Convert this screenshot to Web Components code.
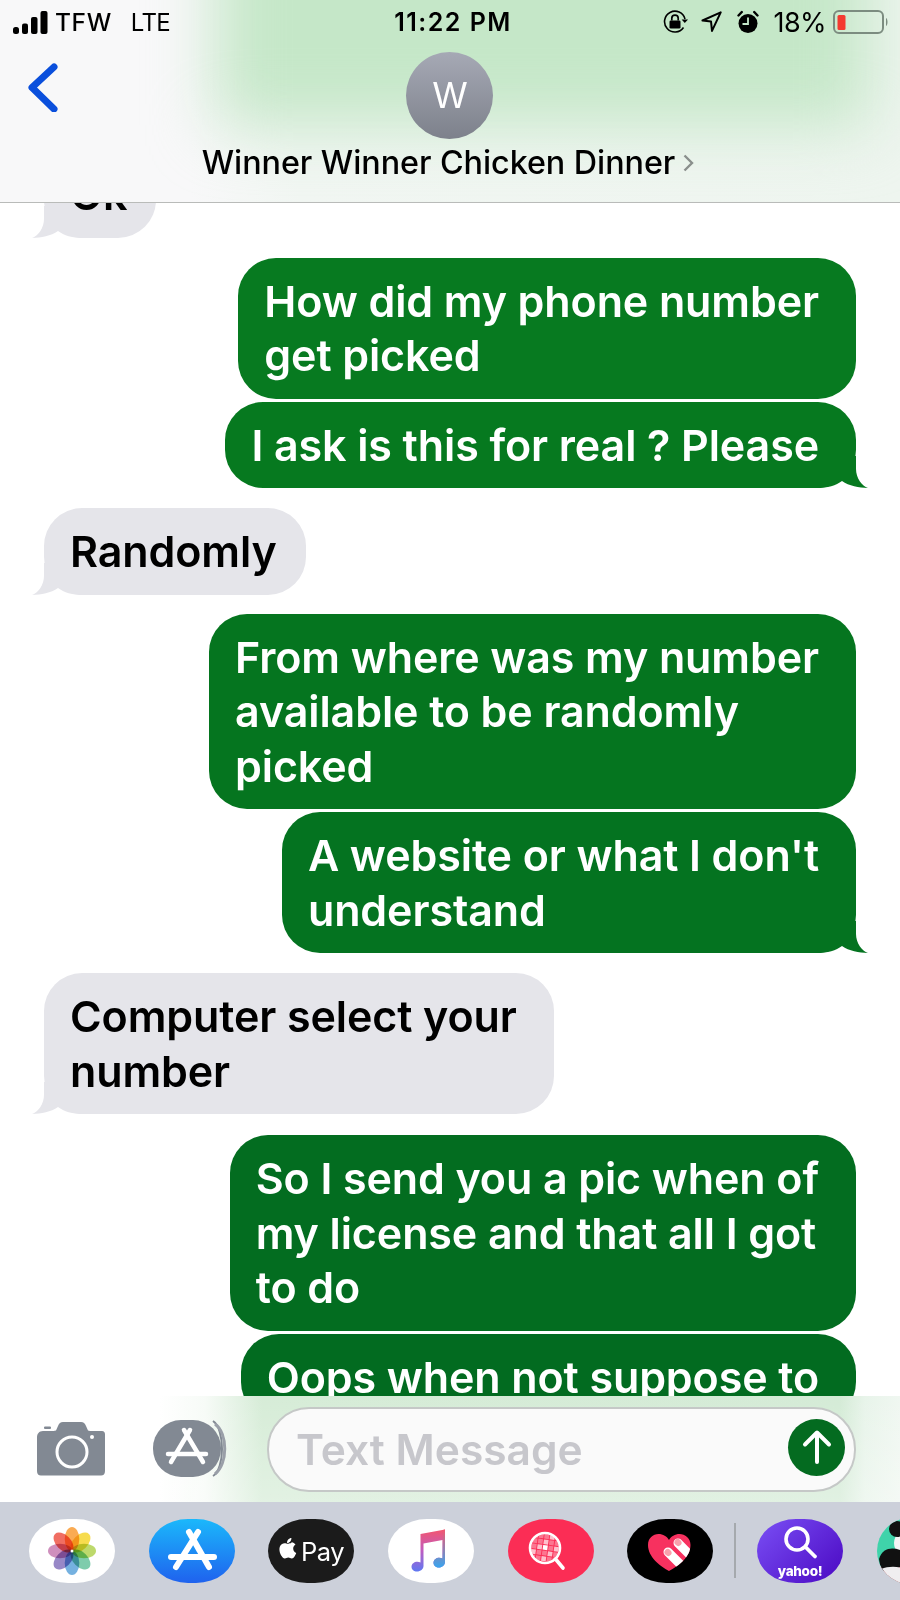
<!DOCTYPE html>
<html lang="en"><head><meta charset="utf-8"><title>Messages</title>
<style>
html,body{margin:0;padding:0;background:#fff}
body{width:900px;height:1600px;overflow:hidden;font-family:Inter,"Liberation Sans",sans-serif}
imessage-screen{width:900px;height:1600px}
</style></head>
<body>
<imessage-screen>
  <chat-header slot="header" name="Winner Winner Chicken Dinner" initial="W"></chat-header>
  <msg-bubble from="them" tail style="margin-top:-52px;--pr:29px">Ok</msg-bubble>
  <msg-bubble from="me" style="--c:#077a20;margin-top:20px">How did my phone number<br>get picked</msg-bubble>
  <msg-bubble from="me" tail style="--c:#06791f;margin-top:3px">I ask is this for real ? Please</msg-bubble>
  <msg-bubble from="them" tail style="margin-top:20px;--pr:29px">Randomly</msg-bubble>
  <msg-bubble from="me" style="--c:#05751f;margin-top:19px">From where was my number<br>available to be randomly<br>picked</msg-bubble>
  <msg-bubble from="me" tail style="--c:#047320;margin-top:3px">A website or what I don't<br>understand</msg-bubble>
  <msg-bubble from="them" tail style="margin-top:20px">Computer select your<br>number</msg-bubble>
  <msg-bubble from="me" style="--c:#036d20;margin-top:21px">So I send you a pic when of<br>my license and that all I got<br>to do</msg-bubble>
  <msg-bubble from="me" style="--c:#026b20;margin-top:3px">Oops when not suppose to</msg-bubble>
  <chat-composer slot="composer" placeholder="Text Message"></chat-composer>
  <app-dock slot="dock"></app-dock>
</imessage-screen>
<script>
const FONT='Inter,"Liberation Sans",sans-serif';
function make(name,html,setup){
  customElements.define(name,class extends HTMLElement{
    connectedCallback(){
      if(this.shadowRoot)return;
      const r=this.attachShadow({mode:'open'});
      r.innerHTML=typeof html==='function'?html(this):html;
      if(setup)setup(this,r);
    }
  });
}
make('imessage-screen',`<style>
:host{display:flex;flex-direction:column;overflow:hidden}
.msgs{flex:1 1 0;min-height:0;overflow:hidden;display:flex;flex-direction:column;padding:0 44px;background:#fff}
</style>
<slot name="header"></slot>
<div class="msgs"><slot></slot></div>
<slot name="composer"></slot>
<slot name="dock"></slot>`);

const TAIL=`<svg class="tail" width="52" height="32" viewBox="0 0 52 32"><path d="M12 0 L12 13 C12 22 6 30 0 32 C9 31.500 19 30 26 25 C32 29.500 40 32 52 32 L52 0 Z"/></svg>`;
make('msg-bubble',el=>`<style>
:host{display:block;flex:none;position:relative;font:600 43px/54.500px ${FONT};
 box-sizing:border-box;border-radius:38px;padding:16px var(--pr,37px) 16px 26px;width:max-content;
 letter-spacing:-.1px}
:host([from=them]){--c:#e5e5ea;background:var(--c);color:#000;align-self:flex-start}
:host([from=me]){background:var(--c);color:#fff;align-self:flex-end}
.tail{position:absolute;bottom:0;fill:var(--c);display:block}
:host([from=them]) .tail{left:-12px}
:host([from=me]) .tail{right:-12px;transform:scaleX(-1)}
.t{position:relative}
</style>${el.hasAttribute('tail')?TAIL:''}<span class="t"><slot></slot></span>`);

make('status-bar',`<style>
:host{display:grid;grid-template-columns:1fr auto 1fr;align-items:center;height:44px;color:#000;font-family:${FONT};position:relative}
.l,.r{display:flex;align-items:center}
.l{padding-left:13px}
.r{justify-content:flex-end;padding-right:12px}
.car{font-size:24.500px;font-weight:500;margin-left:7px;letter-spacing:.6px}
.net{font-size:24px;font-weight:400;margin-left:19px;letter-spacing:-.6px}
.time{font-size:25px;font-weight:600;margin-left:6px;letter-spacing:1.500px}
.pct{font-size:27px;font-weight:400;letter-spacing:-.6px;margin:0 7px 0 15px}
svg{display:block}
.ic{margin-left:15px}
.ic.loc{margin-left:12px}
</style>
<div class="l">
<svg width="35" height="23" viewBox="0 0 35 23"><g fill="#000"><rect x="0" y="16" width="6" height="7" rx="2.500"/><rect x="9" y="12.500" width="6" height="10.500" rx="2"/><rect x="18" y="6" width="6.500" height="17" rx="2"/><rect x="27.500" y="0" width="7" height="23" rx="2"/></g></svg>
<span class="car">TFW</span><span class="net">LTE</span></div>
<div class="time">11:22 PM</div>
<div class="r">
<svg width="26" height="24" viewBox="0 0 26 24"><path d="M20.500 17.500A10.400 10.400 0 1 1 22 9" fill="none" stroke="#000" stroke-width="1.600"/><path d="M18.600 9.500h6.400l-3.200 3.600z" fill="#000"/><rect x="6.500" y="10.500" width="11" height="8" rx="1.300" fill="#000"/><path d="M8.800 10.500V8.300a3.200 3.200 0 0 1 6.400 0v2.200" fill="none" stroke="#000" stroke-width="1.700"/></svg>
<svg class="ic loc" width="21" height="22" viewBox="0 0 21 22"><path d="M19.700 1.300 1.500 9.500l8.500.9 1 9.500z" fill="none" stroke="#000" stroke-width="2" stroke-linejoin="round"/></svg>
<svg class="ic" width="22" height="24" viewBox="0 0 22 24"><circle cx="11" cy="13.500" r="9.500" fill="#000"/><path d="M11 7.500v6.500H5.500" fill="none" stroke="#c6e7c9" stroke-width="1.800"/><path d="M1.500 5.500 4.800 2M20.500 5.500 17.200 2" stroke="#000" stroke-width="2.400" stroke-linecap="round"/></svg>
<span class="pct">18%</span>
<svg width="55" height="24" viewBox="0 0 55 24"><rect x="1" y="1" width="49" height="22" rx="5" fill="none" stroke="#7c8c80" stroke-width="2"/><rect x="4.500" y="5" width="8" height="15" rx="1.500" fill="#f43a30"/><path d="M53 8c2 1 2 7 0 8z" fill="#7c8c80"/></svg>
</div>`);

make('chat-header',el=>`<style>
:host{display:block;flex:none;height:203px;box-sizing:border-box;border-bottom:1px solid #b9bbb9;position:relative;overflow:hidden;
background:linear-gradient(to right,#f8f8f9 190px,#f1f6f2 300px,#eef5ef 100%)}
.wash{position:absolute;left:216px;right:30px;top:-80px;height:205px;background:#c5e7c8;filter:blur(32px)}
.wrap{position:relative}
.nav{display:grid;grid-template-columns:1fr auto 1fr;padding-top:8px}
.back{padding:10px 0 0 27px}
.mid{display:flex;flex-direction:column;align-items:center;margin-right:4px}
.av{width:87px;height:87px;border-radius:50%;background:linear-gradient(#a6a9b5,#7d818b);color:#fff;
 display:flex;align-items:center;justify-content:center;font:400 36px "Liberation Sans",sans-serif;margin-left:4px}
.ttl{display:flex;align-items:center;margin-top:2px;font:500 32.300px/44px ${FONT};color:#000;white-space:nowrap;letter-spacing:-.05px}
.ttl svg{margin-left:8px}
svg{display:block}
</style>
<div class="wash"></div>
<div class="wrap">
<status-bar></status-bar>
<div class="nav">
<div class="back"><svg width="32" height="50" viewBox="0 0 32 50"><path d="M27 5 5 25.500 27 47" fill="none" stroke="#0a4fdc" stroke-width="7" stroke-linecap="round" stroke-linejoin="round"/></svg></div>
<div class="mid"><div class="av">${el.getAttribute('initial')}</div>
<div class="ttl"><span>${el.getAttribute('name')}</span><svg width="11" height="18" viewBox="0 0 11 18"><path d="M1.500 1.500 9 9l-7.500 7.500" fill="none" stroke="#8a8f8c" stroke-width="2.400"/></svg></div></div>
<div></div></div></div>`);

const AS=(c='#fff',w=6)=>`<g stroke="${c}" stroke-width="${w}" stroke-linecap="round" fill="none"><path d="M40 13 60 48"/><path d="M49 13 27 48"/><path d="M22 38H65"/></g>`;
make('chat-composer',el=>`<style>
:host{display:flex;flex:none;height:106px;box-sizing:border-box;align-items:center;padding:0 44px 0 37px;
background:linear-gradient(to bottom,rgba(255,255,255,0),rgba(255,255,255,.3)),
linear-gradient(to right,#fff 160px,#f7fbf7 205px,#d6ecd7 262px,#d4ebd6 840px,#e8f4ea 865px,#f0f7f1 900px)}
svg{display:block}
.field{flex:1;height:85px;box-sizing:border-box;border:2px solid #c5c8c7;border-radius:42px;background:#fafafa;margin-left:36px;
 display:flex;align-items:center;justify-content:space-between;padding:0 9px 0 27px;
 font:600 42.5px ${FONT};color:#c7c7cc}
.send{width:57px;height:57px;border-radius:50%;background:#046b20;display:flex;align-items:center;justify-content:center;margin-top:-4px}
</style>
<svg width="70" height="54" viewBox="0 0 70 54"><path d="M6 9h10.500l2.500-.6 2-4.400C22 1.500 23.500 0 26 0h18c2.500 0 4 1.500 5 4l2 4.500 2 .5h12c2 0 3 1.500 3 3.500V49c0 3-1.500 4.500-4 4.500H4C1.500 53.500 0 52 0 49V15c0-3 2-6 6-6z" fill="#828993"/><rect x="7" y="4.500" width="7" height="2.500" rx="1" fill="#828993"/><circle cx="35" cy="30" r="15" fill="none" stroke="#fff" stroke-width="3"/><circle cx="55" cy="15" r="2" fill="#fff"/></svg>
<svg style="margin-left:46px" width="78" height="58" viewBox="0 0 78 58"><path d="M60 1C72 9 72 49 60 56" fill="none" stroke="#828993" stroke-width="2"/><path d="M62 4C75 13 75 44 62 54" fill="none" stroke="#9a9fa8" stroke-width="3"/><rect x="0" y="0" width="68" height="57" rx="28" ry="28" fill="#828993"/><g stroke="#fff" stroke-width="4.500" stroke-linecap="round" fill="none"><path d="M37 10 18 42"/><path d="M31 10 50 42"/><path d="M15 34H53"/></g></svg>
<div class="field"><span>${el.getAttribute('placeholder')}</span>
<div class="send"><svg width="32" height="36" viewBox="0 0 32 36"><path d="M16 33V4M4 15.500 16 3.500l12 12" fill="none" stroke="#fff" stroke-width="4" stroke-linecap="round" stroke-linejoin="round"/></svg></div></div>`);

let petals='';
[['#f99f3b',0],['#f6d736',45],['#b4d458',90],['#6cc5a0',135],['#62a6dc',180],['#8a78bf',225],['#c880b4',270],['#ee5a4c',315]].forEach(([c,a])=>{
 petals+=`<ellipse cx="43" cy="20" rx="7.300" ry="12" fill="${c}" fill-opacity=".88" transform="rotate(${a} 43 32)" style="mix-blend-mode:multiply"/>`;
});
let grid='';
for(let i=0;i<5;i++)for(let j=0;j<5;j++){const o=(i==2&&j==2)?1:((i+j)%3==0?.7:.35);grid+=`<rect x="${23.600+i*5.600}" y="${15+j*5.600}" width="4.700" height="4.700" fill="#fff" opacity="${o}" transform="rotate(8 37 29)"/>`;}
const APPS={
photos:{bg:'#fff',svg:`<g style="isolation:isolate">${petals}</g><circle cx="43" cy="32" r="1.500" fill="#fff"/>`},
store:{bg:'linear-gradient(#1bb8fb,#1f62ee)',svg:AS()},
pay:{bg:'#1b1b1b',svg:`<path d="M22.800 24.200c-1-.1-2.300.6-3 .6-.9 0-2-.7-3.300-.6-1.700 0-3.300 1-4.200 2.500-1.800 3.100-.5 7.700 1.300 10.200.9 1.200 1.900 2.600 3.300 2.500 1.300 0 1.800-.8 3.400-.8s2 .8 3.400.8 2.300-1.200 3.100-2.500c1-1.400 1.400-2.800 1.400-2.900-1.800-.7-3-2.400-3-4.400 0-1.700 1-3.200 2.300-4-.9-1.300-2.400-2.200-3.700-2.400zM22.300 22.400c.7-.9 1.200-2.100 1.100-3.400-1.100 0-2.400.7-3.200 1.600-.7.8-1.300 2.100-1.100 3.300 1.200.1 2.400-.6 3.200-1.500z" fill="#fff"/><text x="33" y="42" font-family="Inter,Liberation Sans,sans-serif" font-size="25.500" fill="#fff" letter-spacing="-.5">Pay</text>`},
music:{bg:'#fff',svg:`<defs><linearGradient id="m" x1="0" y1="0" x2="0" y2="1"><stop offset="0" stop-color="#f3566f"/><stop offset=".5" stop-color="#c05cc0"/><stop offset="1" stop-color="#5f78f2"/></linearGradient><linearGradient id="m2" x1="0" y1="0" x2="0" y2="1"><stop offset="0" stop-color="#f3566f"/><stop offset="1" stop-color="#38a5ee"/></linearGradient></defs>
<path d="M32.500 15 57 10.500V43c0 3-3 5.500-6 5.500s-5.500-2-5.500-4.800c0-3 2.800-5 5.700-5 1.300 0 2.300.3 3.300.8V21L35.500 24.500V47c0 3-3 5.500-6.500 5.500-3 0-5.500-2-5.500-4.800 0-3 2.800-5 5.800-5 1.200 0 2.300.2 3.200.7z" fill="url(#m)"/><path d="M55 10.900 57 10.500V43c0 3-3 5.500-6 5.500s-5.500-2-5.500-4.800c0-3 2.800-5 5.700-5 1.300 0 2.300.3 3.300.8z" fill="url(#m2)"/>`},
search:{bg:'#fb2d55',svg:`<circle cx="37" cy="29" r="14.500" fill="#fb2d55"/><clipPath id="c"><circle cx="37" cy="29" r="14"/></clipPath><g clip-path="url(#c)">${grid}</g><circle cx="37" cy="29" r="15" fill="none" stroke="#fff" stroke-width="2.600"/><path d="M47.500 40 55 49" stroke="#fff" stroke-width="3.600" stroke-linecap="round"/>`},
heart:{bg:'#000',svg:`<path d="M42 52C33 47 21 38 21 26c0-7 5-11 10.500-11 4.500 0 8.500 2.500 10.500 6 2-3.500 6-6 10.500-6C58 15 63.500 19 63.500 26c0 12-12 21-21.500 26z" fill="#f7315f"/><clipPath id="h"><path d="M42 52C33 47 21 38 21 26c0-7 5-11 10.500-11 4.500 0 8.500 2.500 10.500 6 2-3.500 6-6 10.500-6C58 15 63.500 19 63.500 26c0 12-12 21-21.500 26z"/></clipPath><g clip-path="url(#h)"><path d="M41 33 56 48M51 24 66 39" stroke="#fff" stroke-width="9" stroke-linecap="round"/></g><ellipse cx="41" cy="33.500" rx="3.300" ry="3.700" fill="#f9a0ac" transform="rotate(-45 41 33.500)"/><ellipse cx="51" cy="23.500" rx="3.300" ry="3.700" fill="#f9a0ac" transform="rotate(-45 51 23.500)"/>`},
yahoo:{bg:'linear-gradient(135deg,#7a4ff5,#4a08c2)',svg:`<circle cx="40" cy="20" r="11" fill="none" stroke="#fff" stroke-width="3.600"/><path d="M48.500 28 58 37.500" stroke="#fff" stroke-width="3.800" stroke-linecap="round"/><text x="43" y="57" text-anchor="middle" font-family="Inter,Liberation Sans,sans-serif" font-weight="800" font-size="13.500" letter-spacing="-.3" fill="#fff">yahoo!</text>`}
};
make('dock-app',el=>{const a=APPS[el.getAttribute('app')];return `<style>
:host{display:block;flex:none;width:86px;height:64px;border-radius:39px/32px;overflow:hidden;background:${a.bg}}
svg{display:block}
</style><svg width="86" height="64" viewBox="0 0 86 64">${a.svg}</svg>`});
make('app-dock',`<style>
:host{display:flex;flex:none;height:98px;box-sizing:border-box;background:#ccd0da;align-items:flex-start;padding:17px 0 0 29px;gap:33.700px;overflow:hidden}
.sep{flex:none;width:2px;height:55px;background:#a5a9ad;margin:4px -13px 0 -13px}
.panda{flex:none;margin-left:0}
svg{display:block}
</style>
<dock-app app="photos"></dock-app><dock-app app="store"></dock-app><dock-app app="pay"></dock-app><dock-app app="music"></dock-app><dock-app app="search"></dock-app><dock-app app="heart"></dock-app>
<div class="sep"></div>
<dock-app app="yahoo"></dock-app>
<svg class="panda" width="70" height="64" viewBox="0 0 70 64"><defs><clipPath id="p"><circle cx="33" cy="32" r="33"/></clipPath></defs><g clip-path="url(#p)"><rect width="70" height="64" fill="#3fd3aa"/><path d="M0 48h70v16H0z" fill="#d93a55"/><ellipse cx="34" cy="24" rx="17" ry="15" fill="#f5f5f5"/><circle cx="20" cy="10" r="8" fill="#111"/><path d="M2 40c4-12 14-12 24-8l4 12-14 8H4z" fill="#111"/><path d="M4 50c10-4 22-2 30 2v12H4z" fill="#f0eef0"/></g></svg>`);
</script>
</body></html>
